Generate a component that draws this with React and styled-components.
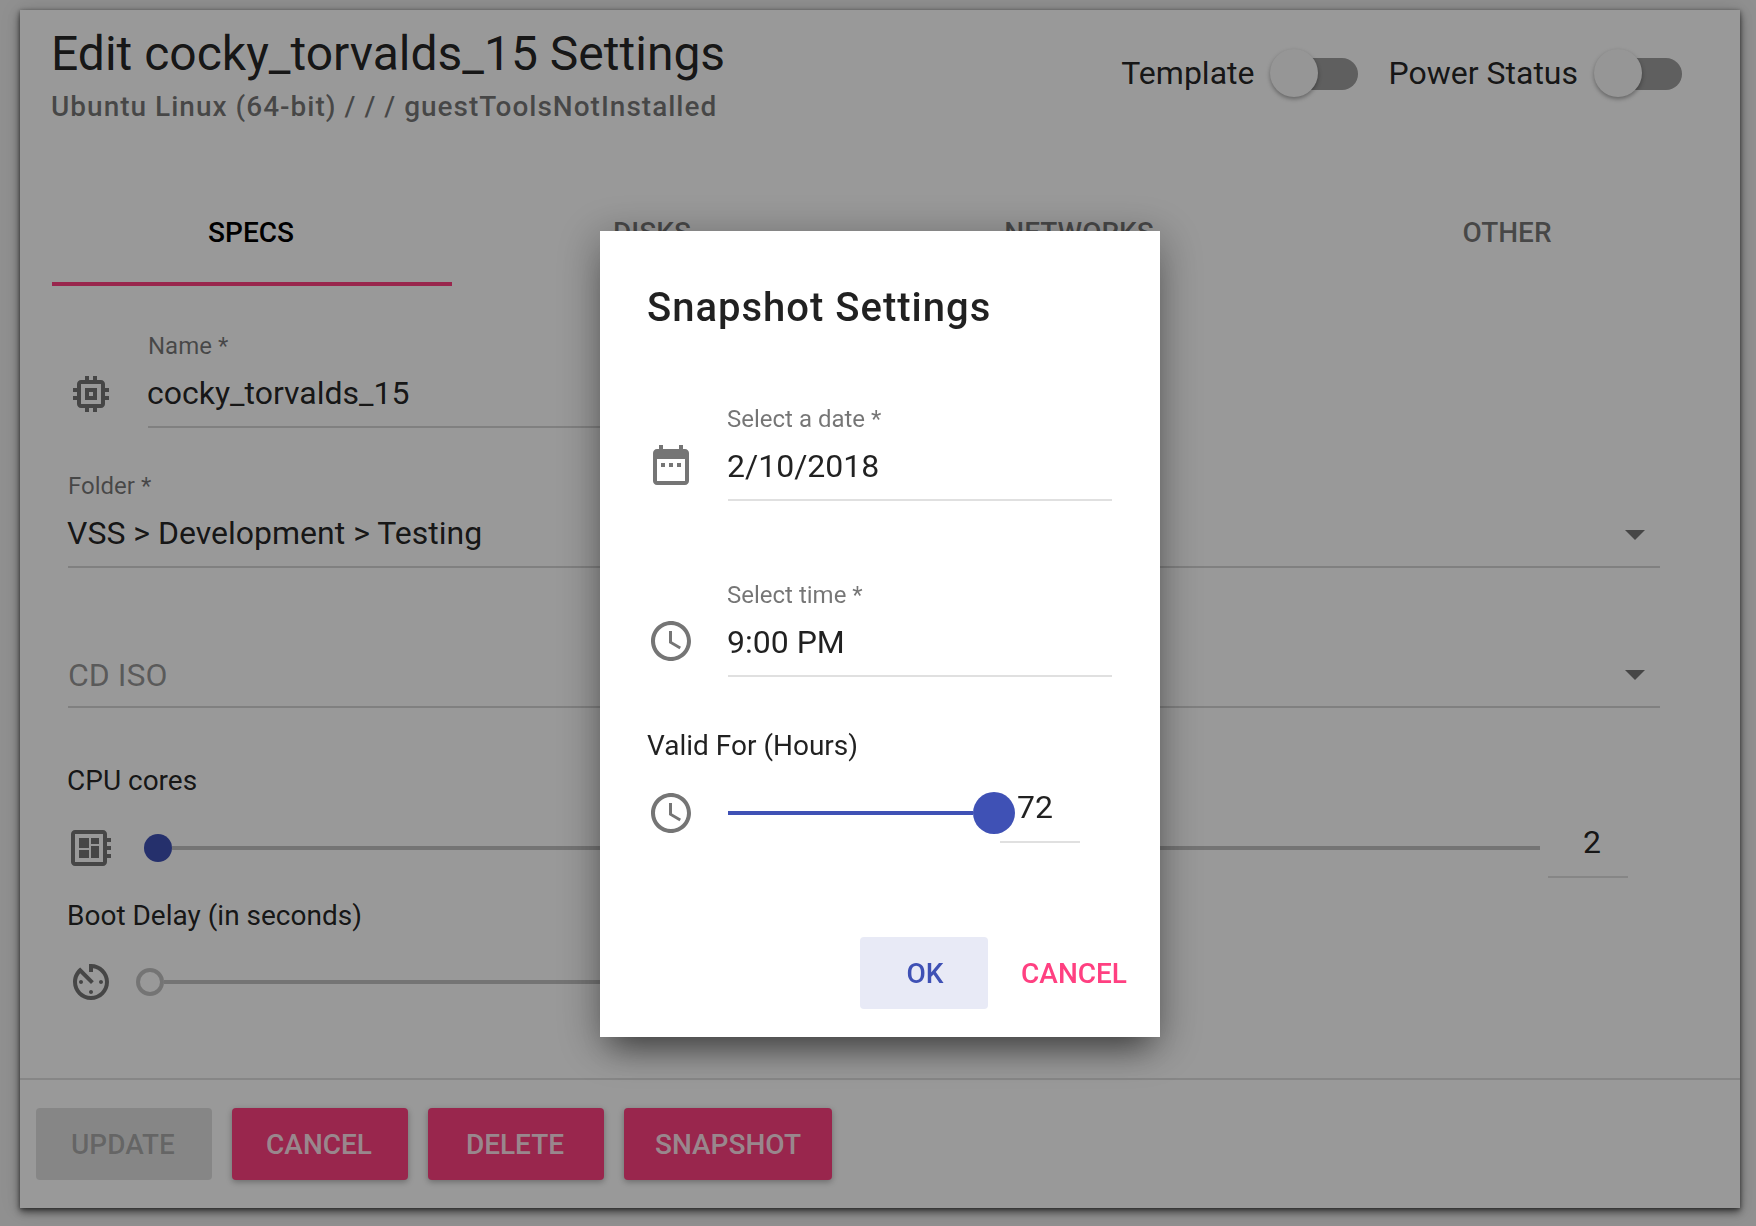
import React from 'react';
import styled, { createGlobalStyle } from 'styled-components';

const icons = {
  memory:
    'M15 9H9v6h6V9zm-2 4h-2v-2h2v2zm8-2V9h-2V7c0-1.1-.9-2-2-2h-2V3h-2v2h-2V3H9v2H7c-1.1 0-2 .9-2 2v2H3v2h2v2H3v2h2v2c0 1.1.9 2 2 2h2v2h2v-2h2v2h2v-2h2c1.1 0 2-.9 2-2v-2h2v-2h-2v-2h2zm-4 6H7V7h10v10z',
  board:
    'M22 9V7h-2V5c0-1.1-.9-2-2-2H4c-1.1 0-2 .9-2 2v14c0 1.1.9 2 2 2h14c1.1 0 2-.9 2-2v-2h2v-2h-2v-2h2v-2h-2V9h2zm-4 10H4V5h14v14zM6 13h5v4H6zm6-6h4v3h-4zM6 7h5v5H6zm6 4h4v6h-4z',
  timer:
    'M11 17c0 .55.45 1 1 1s1-.45 1-1-.45-1-1-1-1 .45-1 1zm0-14v4h2V5.08c3.39.49 6 3.39 6 6.92 0 3.87-3.13 7-7 7s-7-3.13-7-7c0-1.68.59-3.22 1.58-4.42L12 13l1.41-1.41-6.8-6.8v.02C4.42 6.45 3 9.05 3 12c0 4.97 4.02 9 9 9 4.97 0 9-4.03 9-9s-4.03-9-9-9h-1zm7 9c0-.55-.45-1-1-1s-1 .45-1 1 .45 1 1 1 1-.45 1-1zM6 12c0 .55.45 1 1 1s1-.45 1-1-.45-1-1-1-1 .45-1 1z',
  date: 'M9 11H7v2h2v-2zm4 0h-2v2h2v-2zm4 0h-2v2h2v-2zm2-7h-1V2h-2v2H8V2H6v2H5c-1.11 0-1.99.9-1.99 2L3 20c0 1.1.89 2 2 2h14c1.1 0 2-.9 2-2V6c0-1.1-.9-2-2-2zm0 16H5V9h14v11z',
  clock:
    'M11.99 2C6.47 2 2 6.48 2 12s4.47 10 9.99 10C17.52 22 22 17.52 22 12S17.52 2 11.99 2zM12 20c-4.42 0-8-3.58-8-8s3.58-8 8-8 8 3.58 8 8-3.58 8-8 8zm.5-13H11v6l5.25 3.15.75-1.23-4.5-2.67z',
  caret: 'M7 10l5 5 5-5z',
};

function Icon({ name, className }) {
  return (
    <IconSvg className={className} viewBox='0 0 24 24'>
      <path d={icons[name]} />
    </IconSvg>
  );
}

function Toggle({ label }) {
  return (
    <ToggleRow>
      <ToggleLabel>{label}</ToggleLabel>
      <SwitchTrack>
        <SwitchThumb />
      </SwitchTrack>
    </ToggleRow>
  );
}

export default function App() {
  return (
    <>
      <GlobalStyle />
      <Page>
        <Card>
          <Header>
            <div>
              <Title>Edit cocky_torvalds_15 Settings</Title>
              <Subtitle>Ubuntu Linux (64-bit) / / / guestToolsNotInstalled</Subtitle>
            </div>
            <Toggles>
              <Toggle label='Template' />
              <Toggle label='Power Status' />
            </Toggles>
          </Header>

          <Tabs>
            <Tab $active>SPECS</Tab>
            <Tab>DISKS</Tab>
            <Tab>NETWORKS</Tab>
            <Tab>OTHER</Tab>
          </Tabs>

          <Form>
            <NameRow>
              <FieldIcon name='memory' />
              <NameField>
                <Label>Name *</Label>
                <FormValue>cocky_torvalds_15</FormValue>
              </NameField>
            </NameRow>
            <FolderField>
              <Label>Folder *</Label>
              <FormValue>{'VSS > Development > Testing'}</FormValue>
              <Caret name='caret' />
            </FolderField>
            <IsoField>
              <Value $hint>CD ISO</Value>
              <IsoCaret name='caret' />
            </IsoField>
            <SliderLabel>CPU cores</SliderLabel>
            <SliderRow>
              <Icon name='board' />
              <CpuSlider>
                <Thumb />
                <SliderLine />
              </CpuSlider>
              <CpuInput>2</CpuInput>
            </SliderRow>
            <SliderLabel>Boot Delay (in seconds)</SliderLabel>
            <BootRow>
              <Icon name='timer' />
              <BootSlider>
                <Thumb $empty />
                <SliderLine />
              </BootSlider>
            </BootRow>
          </Form>

          <Footer>
            <ActionButton disabled>UPDATE</ActionButton>
            <ActionButton>CANCEL</ActionButton>
            <ActionButton>DELETE</ActionButton>
            <ActionButton $wide>SNAPSHOT</ActionButton>
          </Footer>
        </Card>
      </Page>

      <Overlay>
        <Dialog>
          <DialogTitle>Snapshot Settings</DialogTitle>
          <DialogRow>
            <Icon name='date' />
            <DialogField>
              <Label>Select a date *</Label>
              <Value>2/10/2018</Value>
            </DialogField>
          </DialogRow>
          <TimeRow>
            <Icon name='clock' />
            <DialogField>
              <Label>Select time *</Label>
              <Value>9:00 PM</Value>
            </DialogField>
          </TimeRow>
          <ValidLabel>Valid For (Hours)</ValidLabel>
          <ValidRow>
            <Icon name='clock' />
            <ValidSlider>
              <ValidLine />
              <Thumb $big />
            </ValidSlider>
            <ValidInput>72</ValidInput>
          </ValidRow>
          <DialogActions>
            <OkButton>OK</OkButton>
            <CancelButton>CANCEL</CancelButton>
          </DialogActions>
        </Dialog>
      </Overlay>
    </>
  );
}

const GlobalStyle = createGlobalStyle`
  * {
    box-sizing: border-box;
  }
  html, body {
    margin: 0;
    padding: 0;
    height: 100%;
    overflow: hidden;
    background: #f0f0f0;
    font-family: Roboto, "Liberation Sans", sans-serif;
    color: rgba(0, 0, 0, 0.87);
  }
`;

const IconSvg = styled.svg`
  display: block;
  width: 48px;
  height: 48px;
  flex: none;
  fill: rgba(0, 0, 0, 0.54);
`;

const Page = styled.div`
  height: 1226px;
  padding: 10px 16px 18px 20px;
`;

const Card = styled.div`
  height: 100%;
  display: flex;
  flex-direction: column;
  background: #fff;
  box-shadow: 0 4px 8px rgba(0, 0, 0, 0.55), 0 1px 4px rgba(0, 0, 0, 0.4),
    0 0 20px rgba(0, 0, 0, 0.12);
`;

const Header = styled.div`
  display: flex;
  justify-content: space-between;
  align-items: flex-start;
  padding: 16px 58px 0 31px;
`;

const Title = styled.div`
  font-size: 48px;
  line-height: 56px;
`;

const Subtitle = styled.div`
  margin-top: 7px;
  font-size: 28px;
  line-height: 36px;
  font-weight: 500;
  letter-spacing: 1px;
  color: rgba(0, 0, 0, 0.54);
`;

const Toggles = styled.div`
  display: flex;
  gap: 30px;
  margin-top: 22px;
`;

const ToggleRow = styled.div`
  display: flex;
  align-items: center;
  height: 50px;
`;

const ToggleLabel = styled.div`
  font-size: 32px;
  line-height: 44px;
  margin-right: 16px;
`;

const SwitchTrack = styled.div`
  position: relative;
  width: 88px;
  height: 32px;
  margin-top: 2px;
  border-radius: 0 16px 16px 0;
  background: linear-gradient(to right, transparent 30px, rgba(0, 0, 0, 0.38) 30px);
`;

const SwitchThumb = styled.div`
  position: absolute;
  left: 0;
  top: -9px;
  width: 48px;
  height: 48px;
  border-radius: 50%;
  background: #fafafa;
  box-shadow: 0 2px 4px rgba(0, 0, 0, 0.35);
`;

const Tabs = styled.div`
  display: grid;
  grid-template-columns: 400px 400px 454px 402px;
  margin: 57px 0 0 32px;
`;

const Tab = styled.div`
  height: 104px;
  display: flex;
  align-items: center;
  justify-content: center;
  padding-right: ${p => (p.$active ? 2 : 0)}px;
  font-size: 28px;
  font-weight: 500;
  border-bottom: 4px solid ${p => (p.$active ? '#ff4081' : 'transparent')};
  color: ${p => (p.$active ? '#000' : 'rgba(0, 0, 0, 0.54)')};
`;

const Form = styled.div`
  padding: 0 80px 0 48px;
`;

const NameRow = styled.div`
  display: flex;
  align-items: flex-start;
  margin-top: 44px;
  margin-left: -1px;
`;

const FieldIcon = styled(Icon)`
  margin: 40px 33px 0 0;
`;

const Field = styled.div`
  position: relative;
  padding-bottom: 11px;
  border-bottom: 2px solid rgba(0, 0, 0, 0.16);
`;

const NameField = styled(Field)`
  width: 600px;
`;

const FolderField = styled(Field)`
  margin-top: 42px;
`;

const IsoField = styled(Field)`
  margin-top: 85px;
  padding-bottom: 9px;
`;

const Label = styled.div`
  font-size: 24px;
  line-height: 32px;
  margin-bottom: 9px;
  color: rgba(0, 0, 0, 0.54);
`;

const Value = styled.div`
  font-size: 32px;
  line-height: 44px;
  color: ${p => (p.$hint ? 'rgba(0, 0, 0, 0.42)' : 'rgba(0, 0, 0, 0.87)')};
`;

const FormValue = styled(Value)`
  margin-left: -1px;
`;

const Caret = styled(Icon)`
  position: absolute;
  right: 1px;
  bottom: 8px;
`;

const IsoCaret = styled(Caret)`
  bottom: 8px;
`;

const SliderLabel = styled.div`
  margin: 55px 0 0 -1px;
  font-size: 28px;
  line-height: 36px;
  & ~ & {
    margin-top: 22px;
  }
`;

const SliderRow = styled.div`
  display: flex;
  align-items: center;
  height: 56px;
  margin-top: 21px;
  margin-left: -1px;
`;

const BootRow = styled(SliderRow)`
  margin-top: 20px;
`;

const CpuSlider = styled.div`
  flex: 1;
  display: flex;
  align-items: center;
  margin-left: 29px;
`;

const BootSlider = styled.div`
  width: 700px;
  display: flex;
  align-items: center;
  margin-left: 21px;
`;

const SliderLine = styled.div`
  flex: 1;
  height: 4px;
  background: rgba(0, 0, 0, 0.24);
`;

const Thumb = styled.div`
  flex: none;
  width: ${p => (p.$big ? 42 : 28)}px;
  height: ${p => (p.$big ? 42 : 28)}px;
  border-radius: 50%;
  background: ${p => (p.$empty ? 'transparent' : '#3f51b5')};
  border: ${p => (p.$empty ? '4px solid rgba(0, 0, 0, 0.24)' : 'none')};
`;

const NumberInput = styled.div`
  align-self: flex-start;
  width: 80px;
  height: 58px;
  margin-left: 8px;
  font-size: 32px;
  line-height: 44px;
  text-align: center;
  border-bottom: 2px solid rgba(0, 0, 0, 0.12);
`;

const CpuInput = styled(NumberInput)`
  margin-right: 32px;
  padding-left: 8px;
`;

const Footer = styled.div`
  margin-top: auto;
  display: flex;
  gap: 20px;
  padding: 28px 16px;
  border-top: 2px solid rgba(0, 0, 0, 0.12);
`;

const ActionButton = styled.div`
  width: ${p => (p.$wide ? 208 : 176)}px;
  height: 72px;
  display: flex;
  align-items: center;
  justify-content: center;
  padding-right: ${p => (p.$wide ? 0 : 2)}px;
  border-radius: 4px;
  font-size: 28px;
  font-weight: 500;
  color: ${p => (p.disabled ? 'rgba(0, 0, 0, 0.26)' : 'rgba(255, 255, 255, 0.87)')};
  background: ${p => (p.disabled ? 'rgba(0, 0, 0, 0.12)' : '#ff4081')};
  box-shadow: ${p => (p.disabled ? 'none' : '0 2px 6px rgba(0, 0, 0, 0.3)')};
`;

const Overlay = styled.div`
  position: fixed;
  inset: 0;
  display: flex;
  align-items: flex-start;
  padding: 231px 0 0 600px;
  background: rgba(0, 0, 0, 0.4);
`;

const Dialog = styled.div`
  width: 560px;
  height: 806px;
  padding: 53px 48px 28px 47px;
  background: #fff;
  box-shadow: 0 22px 30px -14px rgba(0, 0, 0, 0.45), 0 8px 40px 4px rgba(0, 0, 0, 0.3);
`;

const DialogTitle = styled.div`
  font-size: 40px;
  line-height: 48px;
  font-weight: 500;
  letter-spacing: 1px;
`;

const DialogRow = styled.div`
  display: flex;
  align-items: flex-start;
  gap: 33px;
  margin-top: 71px;
  > svg {
    margin-top: 38px;
  }
`;

const TimeRow = styled(DialogRow)`
  margin-top: 78px;
`;

const DialogField = styled.div`
  flex: 1;
  padding-bottom: 11px;
  border-bottom: 2px solid rgba(0, 0, 0, 0.12);
  > div {
    margin-left: -1px;
  }
`;

const ValidLabel = styled.div`
  margin-top: 51px;
  font-size: 28px;
  line-height: 36px;
`;

const ValidRow = styled.div`
  display: flex;
  align-items: center;
  height: 56px;
  margin-top: 21px;
`;

const ValidSlider = styled.div`
  width: 287px;
  display: flex;
  align-items: center;
  margin-left: 33px;
`;

const ValidLine = styled.div`
  flex: 1;
  height: 4px;
  background: #3f51b5;
`;

const ValidInput = styled(NumberInput)`
  margin-left: -15px;
  padding-right: 10px;
`;

const DialogActions = styled.div`
  display: flex;
  justify-content: flex-end;
  gap: 8px;
  margin: 96px -40px 0 0;
`;

const OkButton = styled.div`
  width: 128px;
  height: 72px;
  display: flex;
  align-items: center;
  justify-content: center;
  border-radius: 4px;
  padding-left: 2px;
  font-size: 28px;
  font-weight: 500;
  color: #3f51b5;
  background: #e8eaf6;
`;

const CancelButton = styled(OkButton)`
  width: 156px;
  padding-left: 0;
  color: #ff4081;
  background: transparent;
`;
